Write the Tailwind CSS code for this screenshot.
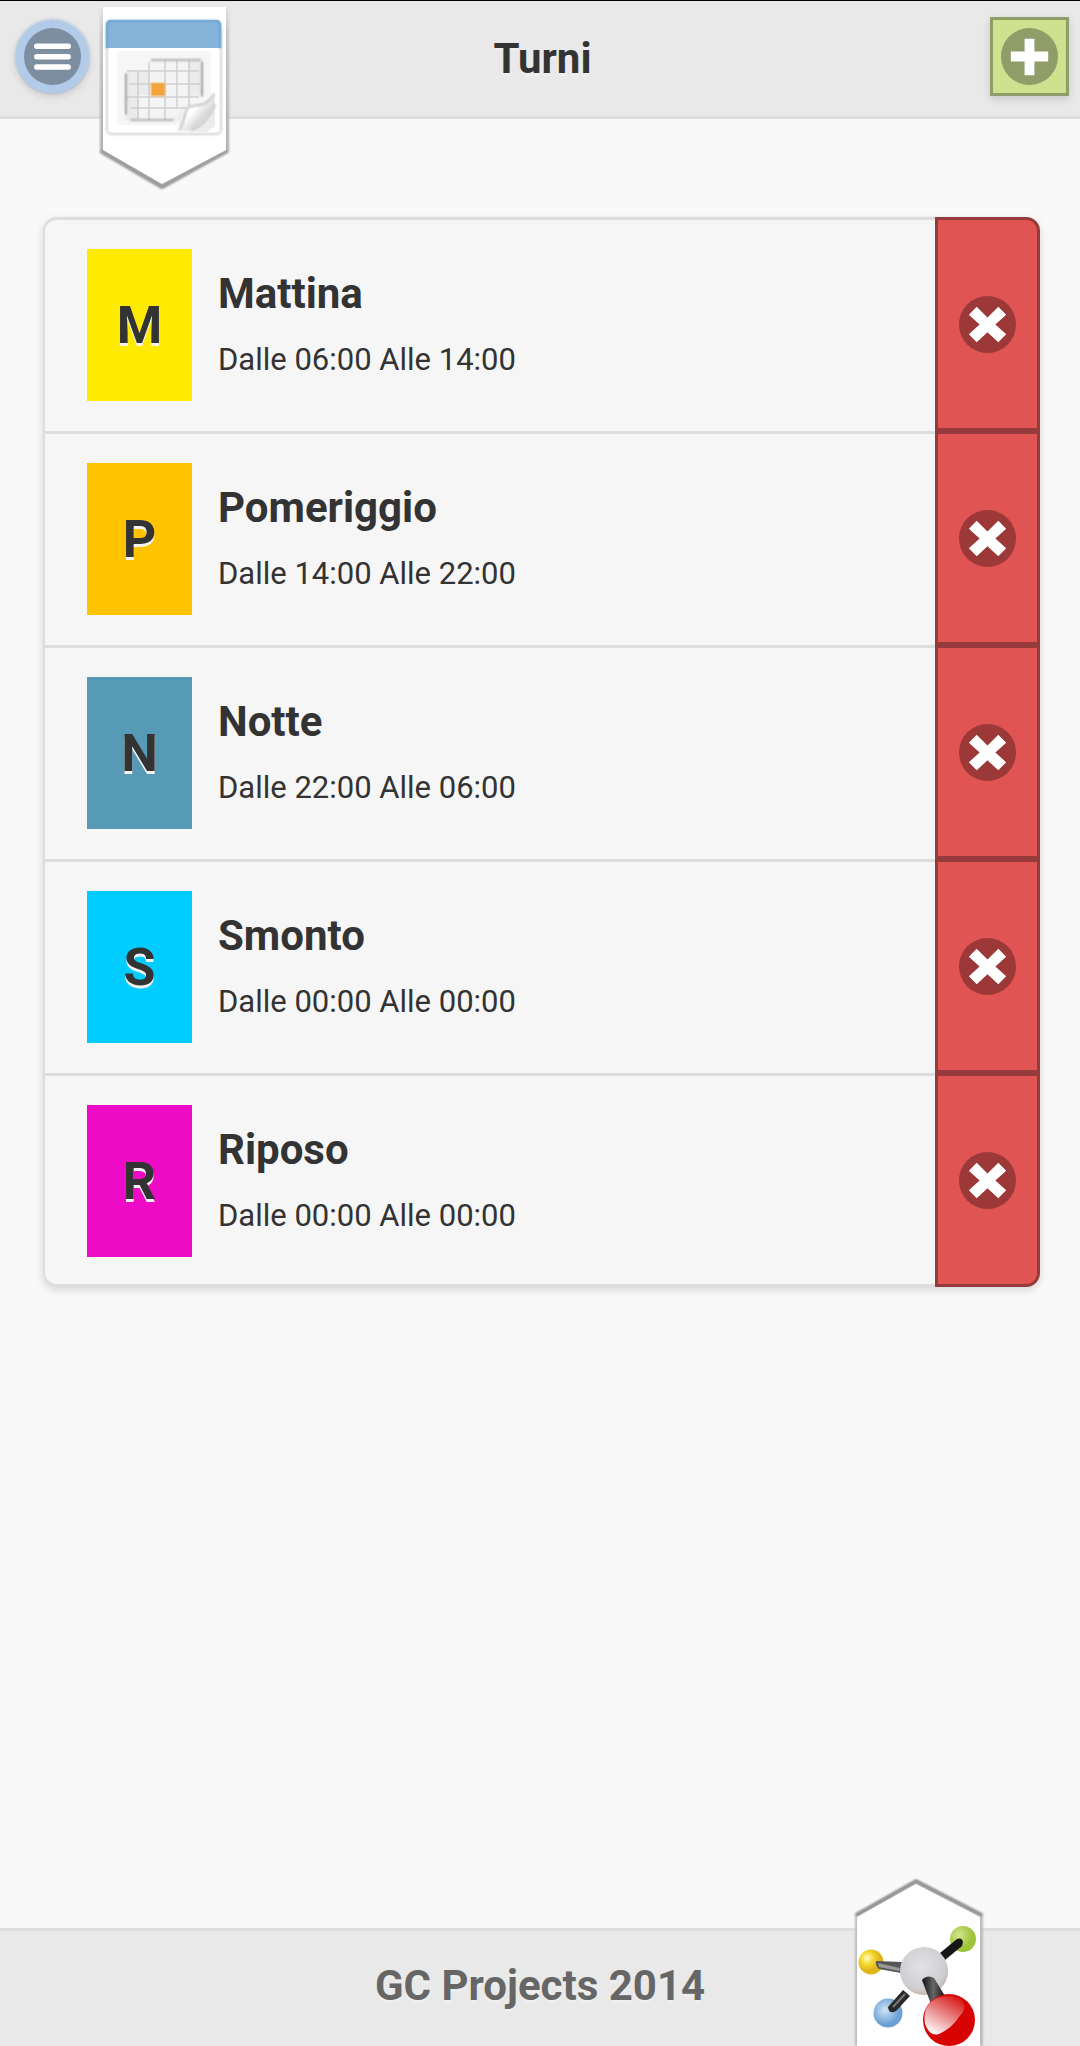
<!DOCTYPE html>
<html lang="it">
<head>
<meta charset="utf-8">
<meta name="viewport" content="width=device-width, initial-scale=1">
<title>Turni</title>
<script src="https://cdn.jsdelivr.net/npm/@tailwindcss/browser@4"></script>
</head>
<body class="min-h-screen flex flex-col bg-[#f9f9f9] text-[#333333] font-[Roboto,sans-serif]">

<svg class="hidden" aria-hidden="true">
  <symbol id="delete" viewBox="0 0 58 58">
    <circle cx="29" cy="29" r="29" fill="#9c3838"/>
    <path d="M10 19l8-8 11 11 11-11 8 8-11 10 11 10-8 8-11-10-11 10-8-8 11-10z" fill="#fff"/>
  </symbol>
</svg>

<header class="relative grid grid-cols-[1fr_auto_1fr] items-start border-t border-t-black border-b-3 border-b-[#dddddd] bg-[#e9e9e9] h-[119px] pt-4 pl-4 pr-[11px]">
  <button type="button" aria-label="Menu" class="mt-[3px] size-[73px] rounded-full bg-[#b2cbe8] shadow-[0_3px_8px_rgba(0,0,0,0.15),0_0_0_2px_#d3dde8] flex items-center justify-center">
    <svg viewBox="0 0 58 58" class="size-[57px]"><circle cx="29" cy="29" r="29" fill="#7d8ea1"/><path d="M13 18.500h32M13 29.200h32M13 39.800h32" stroke="#fff" stroke-width="5.600" stroke-linecap="round"/></svg>
  </button>
  <h1 class="text-[42px] leading-[56px] font-bold mt-[14px] [text-shadow:0_3px_0_#eeeeee]">Turni</h1>
  <button type="button" aria-label="Aggiungi" class="justify-self-end size-[79px] border-3 border-[#8f9d68] bg-[#cee18e] shadow-[0_3px_8px_rgba(0,0,0,0.15)] flex items-center justify-center">
    <svg viewBox="0 0 58 58" class="size-[57px] shrink-0"><circle cx="29" cy="29" r="29" fill="#8f9d68"/><path d="M24 11h10v13h14v10H34v14H24V34H10V24h14z" fill="#fff"/></svg>
  </button>

  <svg class="absolute left-24 top-1 w-[140px] h-[192px]" viewBox="96 5 140 192" aria-hidden="true">
    <defs>
      <linearGradient id="edge" x1="0" x2="0" y1="0" y2="1"><stop offset="0" stop-color="#c4c4c4" stop-opacity=".2"/><stop offset=".15" stop-color="#c4c4c4"/><stop offset="1" stop-color="#a8a8a8"/></linearGradient>
      <linearGradient id="curl" x1="0" y1="0" x2="1" y2="1"><stop offset=".4" stop-color="#fff"/><stop offset=".62" stop-color="#dadada"/><stop offset="1" stop-color="#fafafa"/></linearGradient>
      <filter id="soft" x="-20%" y="-20%" width="140%" height="140%"><feGaussianBlur stdDeviation="1"/></filter>
      <radialGradient id="fade" gradientUnits="userSpaceOnUse" cx="164" cy="90" r="46"><stop offset=".4" stop-color="#fff"/><stop offset="1" stop-color="#fff" stop-opacity=".35"/></radialGradient>
    </defs>
    <path d="M100 8V153l62 36 67-38V8z" fill="url(#edge)" filter="url(#soft)"/>
    <path d="M101 151l61 36 66-36" fill="none" stroke="#999" stroke-width="3" filter="url(#soft)"/>
    <path d="M103 7V150l59 34 64-34V7z" fill="#fff"/>
    <rect x="107" y="24" width="114" height="110" rx="5" fill="#fff" stroke="#d0d0d0" stroke-width="2" filter="url(#soft)"/>
    <path d="M109 48h110v84H109z" fill="#fff"/>
    <path d="M117 51h94v74h-94z" fill="#f6f6f6"/>
    <path d="M106 48V25q0-5 5-5h105q5 0 5 5v23z" fill="#85b3da"/>
    <path d="M107 48V25q0-4 5-4h103q5 0 5 4v23" fill="none" stroke="#6ba5d0" stroke-width="2" filter="url(#soft)"/>
    <path d="M125 71h25V60h53v36h-18l-5 24h-55z" fill="#ebebeb" filter="url(#soft)"/>
    <path d="M139 72h49V61h-38v34h-11v24h38l10-23V72z" fill="#f4f4f4"/>
    <path d="M126 73v42M138 71v48M149 62v58M165 60v60M177 60v48M189 60v46M202 62v35M127 71h72M129 84h71M127 97h72M130 108h56" fill="none" stroke="#cfcfd3" stroke-width="1.500"/>
    <path d="M151 60h50M202 62v34M126 74v40M130 120h44" fill="none" stroke="#999" stroke-width="1.500" filter="url(#soft)"/>
    <rect x="151" y="83" width="14" height="13" fill="#f2a43a" filter="url(#soft)"/>
    <rect x="152" y="84" width="12" height="11" fill="#f2a43a"/>
    <path d="M179 131l8-24 14-4q6-1 14-11v34l-8 6z" fill="#ececec"/>
    <path d="M181 131c5-6 4-15 7-24 8-2 19 0 27-12-1 15-13 33-34 36z" fill="url(#curl)"/>
    <path d="M179 130c5-7 5-16 9-23 11-3 18 1 26-13" fill="none" stroke="#c6c6c6" stroke-width="2" filter="url(#soft)"/>
    <path d="M191 130c12-5 19-13 24-26" fill="none" stroke="#c9c9c9" stroke-width="2.500" filter="url(#soft)"/>
  </svg>
</header>

<main class="flex-1 pt-[98px] pb-16 pl-[43px] pr-10">
  <ul class="rounded-[14px] bg-[#f6f6f6] shadow-[0_3px_8px_rgba(0,0,0,0.15)] [&>li:first-child>a]:rounded-tl-[14px] [&>li:first-child>button]:rounded-tr-[14px] [&>li:last-child>a]:rounded-bl-[14px] [&>li:last-child>a]:border-b-3 [&>li:last-child>button]:rounded-br-[14px]">
    <li class="flex">
      <a href="#mattina" class="flex-1 flex gap-[26px] border-t-3 border-l-2 border-[#dddddd] h-[214px] pt-[29px] pl-[42px]">
        <span class="w-[105px] h-[152px] bg-[#ffeb00] flex items-center justify-center pt-[2px] text-[52px] leading-[60px] font-bold [text-shadow:0_3px_0_#f3f3f3]">M</span>
        <span class="flex flex-col gap-4 pt-[17px]"><strong class="text-[42px] leading-[56px] font-bold">Mattina</strong><span class="text-[31px] leading-[44px]">Dalle 06:00 Alle 14:00</span></span>
      </a>
      <button type="button" aria-label="Elimina Mattina" class="w-[105px] border-3 border-[#963a3c] bg-[#e05453] flex items-center justify-center"><svg class="size-[57px]"><use href="#delete"/></svg></button>
    </li>
    <li class="flex">
      <a href="#pomeriggio" class="flex-1 flex gap-[26px] border-t-3 border-l-2 border-[#dddddd] h-[214px] pt-[29px] pl-[42px]">
        <span class="w-[105px] h-[152px] bg-[#ffc400] flex items-center justify-center pt-[2px] text-[52px] leading-[60px] font-bold [text-shadow:0_3px_0_#f3f3f3]">P</span>
        <span class="flex flex-col gap-4 pt-[17px]"><strong class="text-[42px] leading-[56px] font-bold">Pomeriggio</strong><span class="text-[31px] leading-[44px]">Dalle 14:00 Alle 22:00</span></span>
      </a>
      <button type="button" aria-label="Elimina Pomeriggio" class="w-[105px] border-3 border-[#963a3c] bg-[#e05453] flex items-center justify-center"><svg class="size-[57px]"><use href="#delete"/></svg></button>
    </li>
    <li class="flex">
      <a href="#notte" class="flex-1 flex gap-[26px] border-t-3 border-l-2 border-[#dddddd] h-[214px] pt-[29px] pl-[42px]">
        <span class="w-[105px] h-[152px] bg-[#579ab6] flex items-center justify-center pt-[2px] text-[52px] leading-[60px] font-bold [text-shadow:0_3px_0_#f3f3f3]">N</span>
        <span class="flex flex-col gap-4 pt-[17px]"><strong class="text-[42px] leading-[56px] font-bold">Notte</strong><span class="text-[31px] leading-[44px]">Dalle 22:00 Alle 06:00</span></span>
      </a>
      <button type="button" aria-label="Elimina Notte" class="w-[105px] border-3 border-[#963a3c] bg-[#e05453] flex items-center justify-center"><svg class="size-[57px]"><use href="#delete"/></svg></button>
    </li>
    <li class="flex">
      <a href="#smonto" class="flex-1 flex gap-[26px] border-t-3 border-l-2 border-[#dddddd] h-[214px] pt-[29px] pl-[42px]">
        <span class="w-[105px] h-[152px] bg-[#00ccff] flex items-center justify-center pt-[2px] text-[52px] leading-[60px] font-bold [text-shadow:0_3px_0_#f3f3f3]">S</span>
        <span class="flex flex-col gap-4 pt-[17px]"><strong class="text-[42px] leading-[56px] font-bold">Smonto</strong><span class="text-[31px] leading-[44px]">Dalle 00:00 Alle 00:00</span></span>
      </a>
      <button type="button" aria-label="Elimina Smonto" class="w-[105px] border-3 border-[#963a3c] bg-[#e05453] flex items-center justify-center"><svg class="size-[57px]"><use href="#delete"/></svg></button>
    </li>
    <li class="flex">
      <a href="#riposo" class="flex-1 flex gap-[26px] border-t-3 border-l-2 border-[#dddddd] h-[214px] pt-[29px] pl-[42px]">
        <span class="w-[105px] h-[152px] bg-[#ee0bc6] flex items-center justify-center pt-[2px] text-[52px] leading-[60px] font-bold [text-shadow:0_3px_0_#f3f3f3]">R</span>
        <span class="flex flex-col gap-4 pt-[17px]"><strong class="text-[42px] leading-[56px] font-bold">Riposo</strong><span class="text-[31px] leading-[44px]">Dalle 00:00 Alle 00:00</span></span>
      </a>
      <button type="button" aria-label="Elimina Riposo" class="w-[105px] border-3 border-[#963a3c] bg-[#e05453] flex items-center justify-center"><svg class="size-[57px]"><use href="#delete"/></svg></button>
    </li>
  </ul>
</main>

<footer class="relative border-t-3 border-[#dddddd] bg-[#e9e9e9] h-[118px] pt-[27px] text-center">
  <p class="text-[42px] leading-[56px] font-bold text-[#666666] [text-shadow:0_3px_0_#eeeeee]">GC Projects 2014</p>
  <svg class="absolute right-[90px] bottom-0 w-[140px] h-[171px]" viewBox="850 1875 140 171" aria-hidden="true">
    <defs>
      <radialGradient id="yellow" cx=".35" cy=".35"><stop offset="0" stop-color="#fffbd0"/><stop offset=".5" stop-color="#f5d92e"/><stop offset="1" stop-color="#e0b51c"/></radialGradient>
      <radialGradient id="green" cx=".35" cy=".35"><stop offset="0" stop-color="#d3e68e"/><stop offset="1" stop-color="#9fc43c"/></radialGradient>
      <radialGradient id="blue" cx=".4" cy=".4"><stop offset="0" stop-color="#d2e4f5"/><stop offset="1" stop-color="#6aa0d4"/></radialGradient>
      <radialGradient id="grey" cx=".45" cy=".4" r=".6"><stop offset="0" stop-color="#e2e2e5"/><stop offset=".8" stop-color="#cfcfd3"/><stop offset="1" stop-color="#c8b6b0"/></radialGradient>
      <linearGradient id="gloss" x1=".8" y1="0" x2=".2" y2="1"><stop offset="0" stop-color="#d81414"/><stop offset=".5" stop-color="#e88a8a"/><stop offset="1" stop-color="#fff"/></linearGradient>
      <linearGradient id="rod" x1="0" y1="0" x2="1" y2="0"><stop offset="0" stop-color="#111"/><stop offset=".5" stop-color="#666"/><stop offset="1" stop-color="#111"/></linearGradient>
      <filter id="soft2" x="-20%" y="-20%" width="140%" height="140%"><feGaussianBlur stdDeviation="1"/></filter>
    </defs>
    <path d="M855 2046V1914l61-34 67 34V2046z" fill="#bcbcbc" filter="url(#soft2)"/>
    <path d="M856 1915l60-34 66 34" fill="none" stroke="#888" stroke-width="3" filter="url(#soft2)"/>
    <path d="M857 2046V1917l59-33 64 33V2046z" fill="#fff"/>
    <circle cx="963" cy="1939" r="13" fill="url(#green)"/>
    <path d="M940 1953l17-14q5-2 6 3l-1 4-17 14z" fill="#161616"/>
    <circle cx="871" cy="1962" r="12.500" fill="url(#yellow)"/>
    <path d="M876 1961l26 1-1 11-22-4q-4-4-3-8z" fill="#555"/>
    <path d="M878 1963l22 5-1 3-20-4z" fill="#999"/>
    <circle cx="888" cy="2013" r="14.500" fill="url(#blue)"/>
    <path d="M888 2007l15-17 7 6-14 15q-7 4-8-4z" fill="#292929"/>
    <path d="M893 2007l12-13" stroke="#777" stroke-width="2"/>
    <circle cx="924" cy="1971" r="24" fill="url(#grey)"/>
    <path d="M922 1980q5-6 12-2l11 18-14 8z" fill="url(#rod)"/>
    <circle cx="949" cy="2020" r="26" fill="#d80404"/>
    <path d="M925 2024q-3-19 12-26 14-5 25 2 6 8-3 17-7 11-20 17-9 3-14-10z" fill="url(#gloss)"/>
  </svg>
</footer>
</body>
</html>
